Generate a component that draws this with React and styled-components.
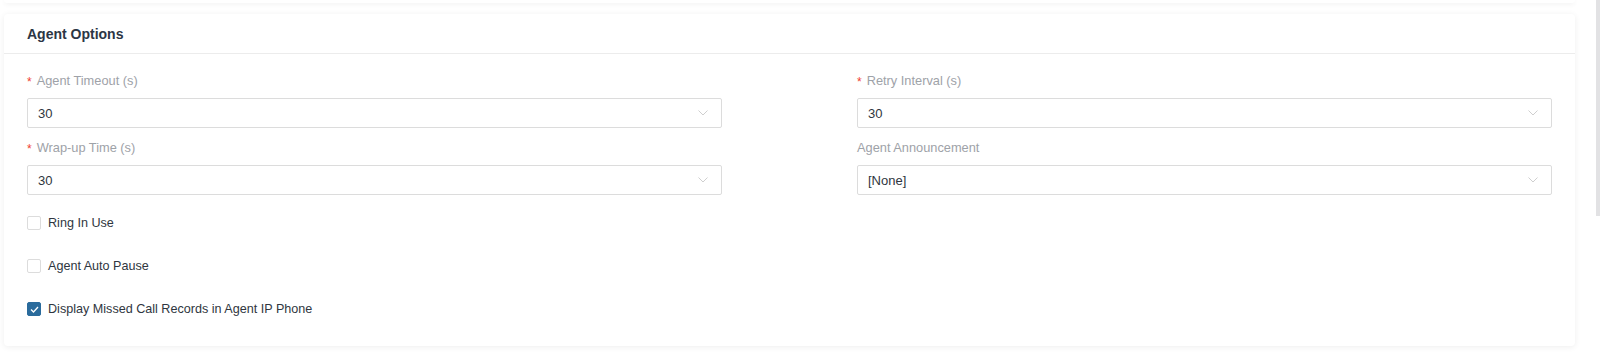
import * as React from "react"
import styled, { createGlobalStyle } from 'styled-components';

const GlobalStyle = createGlobalStyle`
  html, body {
    margin: 0;
    padding: 0;
    background: #fff;
    font-family: "Liberation Sans", Arial, sans-serif;
    overflow: hidden;
  }
`

// styles
const Page = styled.div`
  position: relative;
  width: 1600px;
  height: 352px;
  padding: 0 25px 0 4px;
  box-sizing: border-box;
`
const PrevCard = styled.div`
  height: 3px;
  background: #fff;
  border-radius: 0 0 4px 4px;
  box-shadow: 0 1px 5px rgba(0,0,0,0.07);
`
const Card = styled.section`
  margin-top: 11px;
  background: #fff;
  border-radius: 4px;
  box-shadow: 0 1px 6px rgba(0,0,0,0.07);
`
const CardHeader = styled.header`
  height: 39px;
  display: flex;
  align-items: center;
  padding: 0 23px;
  border-bottom: 1px solid #ececec;
  font-size: 14px;
  font-weight: 700;
  color: #2c3645;
`
const CardBody = styled.div`
  padding: 18px 23px 30px;
`
const Grid = styled.div`
  display: grid;
  grid-template-columns: 1fr 1fr;
  column-gap: 135px;
  row-gap: 11px;
`
const Field = styled.div`
  display: flex;
  flex-direction: column;
`
const Label = styled.label`
  height: 18px;
  line-height: 18px;
  margin-bottom: 8px;
  font-size: 12.8px;
  color: #9ea2a8;
  display: flex;
  align-items: center;
`
const Required = styled.span`
  color: #f0412f;
  margin-right: 5px;
  font-size: 12px;
  position: relative;
  top: 1px;
`
const Select = styled.div`
  height: 30px;
  box-sizing: border-box;
  border: 1px solid #dcdcdc;
  border-radius: 2px;
  display: flex;
  align-items: center;
  justify-content: space-between;
  padding: 0 13px 0 10px;
  font-size: 13px;
  color: #2f3640;
`
const Chevron = styled.svg`
  width: 10px;
  height: 6px;
`
const CheckList = styled.div`
  margin-top: 21px;
  display: flex;
  flex-direction: column;
  gap: 29px;
`
const CheckRow = styled.label`
  display: flex;
  align-items: center;
  gap: 7px;
  height: 14px;
  font-size: 12.6px;
  color: #2f3640;
`
const Box = styled.span`
  width: 14px;
  height: 14px;
  box-sizing: border-box;
  border-radius: 2px;
  border: 1px solid ${p => p.$checked ? '#2a6b9c' : '#dcdcdc'};
  background: ${p => p.$checked ? '#2a6b9c' : '#fff'};
  display: flex;
  align-items: center;
  justify-content: center;
`
const ScrollThumb = styled.div`
  position: absolute;
  right: 0;
  top: 0;
  width: 4px;
  height: 216px;
  background: #e2e2e4;
`

const SelectBox = ({ value }) => (
  <Select>
    <span>{value}</span>
    <Chevron viewBox="0 0 10 6">
      <path d="M0.5 0.5 L5 5 L9.5 0.5" fill="none" stroke="#cfcfcf" strokeWidth="1" />
    </Chevron>
  </Select>
)

const Check = ({ checked, children }) => (
  <CheckRow>
    <Box $checked={checked}>
      {checked && (
        <svg width="9" height="7" viewBox="0 0 9 7">
          <path d="M1 3.5 L3.5 6 L8 1" fill="none" stroke="#fff" strokeWidth="1.3" />
        </svg>
      )}
    </Box>
    {children}
  </CheckRow>
)

const fields = [
  { label: 'Agent Timeout (s)', value: '30', required: true },
  { label: 'Retry Interval (s)', value: '30', required: true },
  { label: 'Wrap-up Time (s)', value: '30', required: true },
  { label: 'Agent Announcement', value: '[None]', required: false },
]

const App = () => {
  return (
    <Page>
      <GlobalStyle />
      <PrevCard />
      <Card>
        <CardHeader>Agent Options</CardHeader>
        <CardBody>
          <Grid>
            {fields.map(f => (
              <Field key={f.label}>
                <Label>
                  {f.required && <Required>*</Required>}
                  {f.label}
                </Label>
                <SelectBox value={f.value} />
              </Field>
            ))}
          </Grid>
          <CheckList>
            <Check>Ring In Use</Check>
            <Check>Agent Auto Pause</Check>
            <Check checked>Display Missed Call Records in Agent IP Phone</Check>
          </CheckList>
        </CardBody>
      </Card>
      <ScrollThumb />
    </Page>
  )
}

export default App
